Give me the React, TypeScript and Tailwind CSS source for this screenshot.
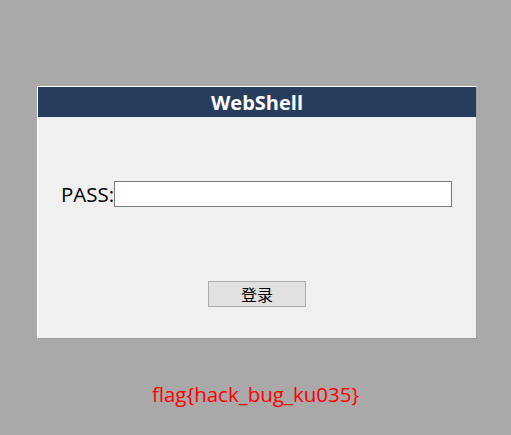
import React, { useState } from 'react';

const App: React.FC = () => {
  const [pass, setPass] = useState<string>('');

  return (
    <div className="min-h-[435px] bg-[#a9a9a9] pt-[86px] font-['Open_Sans','Noto_Sans_CJK_SC',sans-serif]">
      {/* login panel */}
      <div className="ml-[37px] flex h-[253px] w-[440px] flex-col border border-t-white border-l-white border-r-[#a0a0a0] border-b-[#a0a0a0] bg-[#f0f0f0]">
        <div className="flex h-[30px] items-center justify-center bg-[#283d5d] pt-[2px] text-[20px] font-bold text-white">
          WebShell
        </div>

        <div className="mt-[64px] flex h-[26px] items-center pl-[23px]">
          <span className="text-[20.5px] leading-[26px] text-black">PASS:</span>
          <input
            type="password"
            value={pass}
            onChange={e => setPass(e.target.value)}
            className="h-[26px] w-[338px] border border-[#7a7a7a] bg-white px-1 outline-none"
          />
        </div>

        <button className="mt-[74px] h-[26px] w-[98px] self-center border border-[#adadad] bg-[#e1e1e1] font-['Noto_Sans_CJK_SC',sans-serif] text-[16px] leading-none text-black">
          登录
        </button>
      </div>

      <p className="mt-[41px] text-center text-[20.5px] leading-[28px] text-[#ff0000]">flag{'{'}hack_bug_ku035{'}'}</p>
    </div>
  );
};

export default App;
